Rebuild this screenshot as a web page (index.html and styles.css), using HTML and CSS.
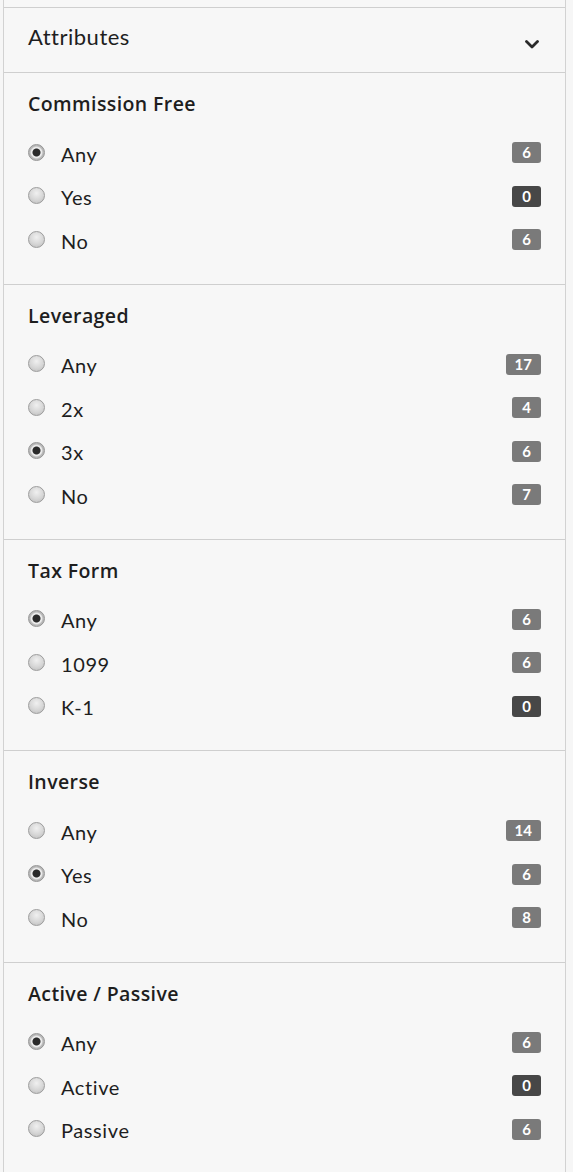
FILE: index.html
```html
<!DOCTYPE html>
<html>
<head>
<meta charset="utf-8">
<link rel="stylesheet" href="styles.css">
</head>
<body>
<div class="panel">
  <div class="prev"></div>
  <div class="header">
    <span class="header-title">Attributes</span>
    <svg class="chevron" width="14" height="9" viewBox="0 0 14 9"><path d="M1.5 1.5 L7 7 L12.5 1.5" fill="none" stroke="#2a2a2a" stroke-width="2.8" stroke-linecap="round" stroke-linejoin="round"/></svg>
  </div>

  <div class="section">
    <div class="section-title">Commission Free</div>
    <ul class="options">
      <li class="option"><span class="radio checked"></span><span class="label">Any</span><span class="badge">6</span></li>
      <li class="option"><span class="radio"></span><span class="label">Yes</span><span class="badge zero">0</span></li>
      <li class="option"><span class="radio"></span><span class="label">No</span><span class="badge">6</span></li>
    </ul>
  </div>

  <div class="section">
    <div class="section-title">Leveraged</div>
    <ul class="options">
      <li class="option"><span class="radio"></span><span class="label">Any</span><span class="badge">17</span></li>
      <li class="option"><span class="radio"></span><span class="label">2x</span><span class="badge">4</span></li>
      <li class="option"><span class="radio checked"></span><span class="label">3x</span><span class="badge">6</span></li>
      <li class="option"><span class="radio"></span><span class="label">No</span><span class="badge">7</span></li>
    </ul>
  </div>

  <div class="section">
    <div class="section-title">Tax Form</div>
    <ul class="options">
      <li class="option"><span class="radio checked"></span><span class="label">Any</span><span class="badge">6</span></li>
      <li class="option"><span class="radio"></span><span class="label">1099</span><span class="badge">6</span></li>
      <li class="option"><span class="radio"></span><span class="label">K-1</span><span class="badge zero">0</span></li>
    </ul>
  </div>

  <div class="section">
    <div class="section-title">Inverse</div>
    <ul class="options">
      <li class="option"><span class="radio"></span><span class="label">Any</span><span class="badge">14</span></li>
      <li class="option"><span class="radio checked"></span><span class="label">Yes</span><span class="badge">6</span></li>
      <li class="option"><span class="radio"></span><span class="label">No</span><span class="badge">8</span></li>
    </ul>
  </div>

  <div class="section last">
    <div class="section-title">Active / Passive</div>
    <ul class="options">
      <li class="option"><span class="radio checked"></span><span class="label">Any</span><span class="badge">6</span></li>
      <li class="option"><span class="radio"></span><span class="label">Active</span><span class="badge zero">0</span></li>
      <li class="option"><span class="radio"></span><span class="label">Passive</span><span class="badge">6</span></li>
    </ul>
  </div>
</div>
</body>
</html>
```

FILE: styles.css
```css
html, body {
  margin: 0;
  padding: 0;
  background: #f6f6f6;
}

body {
  font-family: Lato, "Liberation Sans", sans-serif;
  color: #1e1e1e;
}

.panel {
  margin-left: 3px;
  width: 563px;
  box-sizing: border-box;
  border-left: 1px solid #d2d2d2;
  border-right: 1px solid #d2d2d2;
  background: #f7f7f7;
  min-height: 1172px;
}

.prev {
  height: 7px;
  border-bottom: 1px solid #cfcfcf;
}

.header {
  height: 65px;
  box-sizing: border-box;
  display: flex;
  align-items: center;
  justify-content: space-between;
  padding: 0 26px 0 24px;
  border-bottom: 1px solid #cfcfcf;
}

.header-title {
  font-size: 22px;
  line-height: 24px;
  margin-top: -7px;
  letter-spacing: 0.5px;
}

.chevron {
  display: block;
  margin-top: 8px;
}

.section {
  padding: 20px 24px 21px 24px;
  border-bottom: 1px solid #cfcfcf;
}

.section.last {
  border-bottom: none;
}

.section-title {
  font-family: "Open Sans", Lato, sans-serif;
  font-size: 19.5px;
  line-height: 22px;
  font-weight: 600;
  letter-spacing: 0.4px;
}

.options {
  list-style: none;
  margin: 17px 0 0 0;
  padding: 0;
}

.option {
  height: 43.5px;
  display: flex;
  align-items: center;
}

.radio {
  width: 17px;
  height: 17px;
  box-sizing: border-box;
  border-radius: 50%;
  border: 1px solid #9c9c9c;
  background: radial-gradient(circle at 50% 35%, #f0f0f0 0%, #d6d6d6 55%, #bababa 100%);
  margin-right: 16px;
  margin-top: -3px;
  flex: none;
}

.radio.checked {
  background: radial-gradient(circle, #2a2a2a 0 3.5px, #ececec 4.5px 5.2px, #b8b8b8 6.5px 100%);
  border-color: #959595;
}

.label {
  font-size: 20px;
  line-height: 24px;
  flex: 1;
  letter-spacing: 0.6px;
}

.badge {
  height: 21px;
  line-height: 21px;
  min-width: 29px;
  box-sizing: border-box;
  padding: 0 9px;
  border-radius: 3px;
  background: #7a7a7a;
  color: #fff;
  font-size: 15px;
  font-weight: 700;
  text-align: center;
  margin-top: -2px;
}

.badge.zero {
  background: #474747;
}
```
